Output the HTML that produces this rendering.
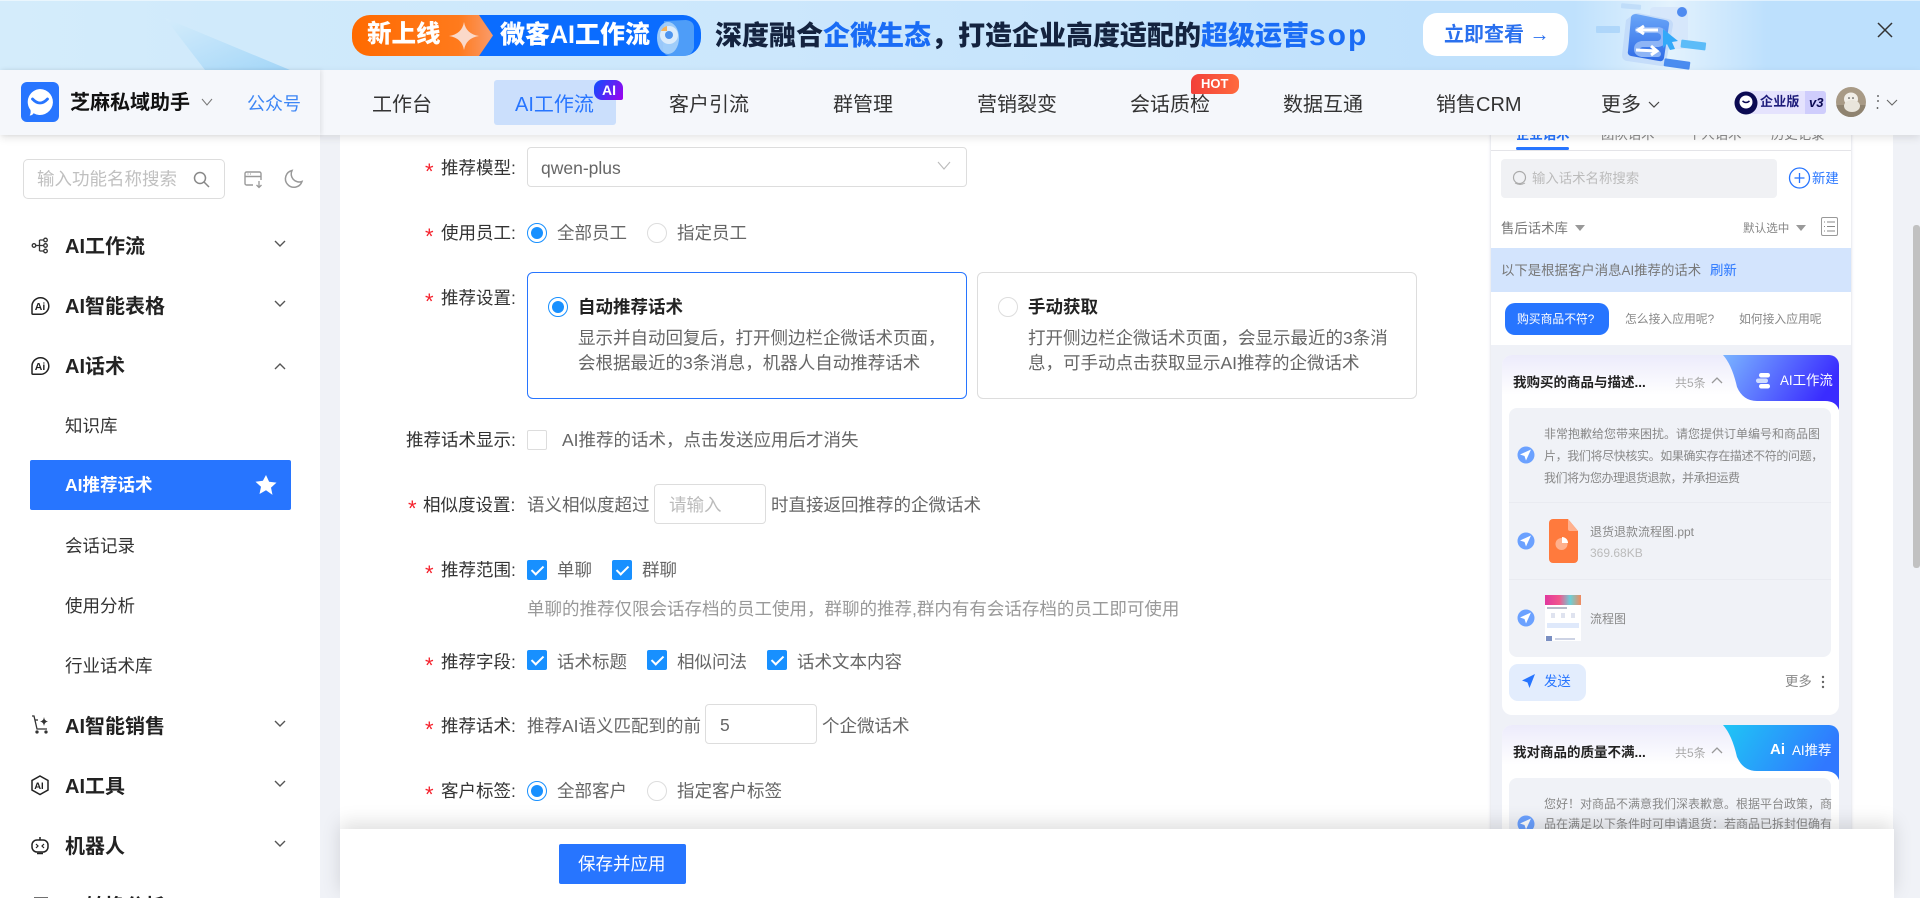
<!DOCTYPE html>
<html lang="zh-CN"><head><meta charset="utf-8"><title>AI推荐话术</title>
<style>
html,body{margin:0;padding:0;width:1920px;height:898px;overflow:hidden;background:#f0f2f7}
body{font-family:"Liberation Sans","Noto Sans CJK SC",sans-serif;position:relative;font-size:17.5px;color:#333}
.a,.t{position:absolute;box-sizing:border-box}
.t{white-space:nowrap;line-height:30px;height:30px}
.l{color:#333}.o{color:#666}.r{color:#f5222d;font-size:22px;margin-top:4px;margin-left:-1px}
.b{font-weight:700}
.nav{font-size:20px;color:#333;line-height:30px;top:90px}
.m{font-size:20px;font-weight:700;color:#222;left:65px}
.s{font-size:17.5px;color:#333;left:65px}
.radio{position:absolute;width:20px;height:20px;border-radius:50%;border:1px solid #ddd;background:#fff;box-sizing:border-box}
.radio.on{border-color:#1890ff}
.radio.on:after{content:"";position:absolute;left:3px;top:3px;width:12px;height:12px;border-radius:50%;background:#1890ff}
.cb{position:absolute;width:20px;height:20px;border-radius:2px;background:#1890ff;box-sizing:border-box}
.cb:after{content:"";position:absolute;left:7px;top:3px;width:5px;height:10px;border:solid #fff;border-width:0 2px 2px 0;transform:rotate(45deg)}
.inp{position:absolute;background:#fff;border:1px solid #ddd;border-radius:4px;box-sizing:border-box}
.p{font-size:12px;color:#888}
.p13{font-size:13.4px}
svg{position:absolute;overflow:visible}
</style></head><body>

<!-- banner -->
<div class="a" style="left:0;top:0;width:1920px;height:70px;overflow:hidden;background:linear-gradient(90deg,#d4ecfb 0,#d0eafb 12%,#cce7fc 40%,#c0e1fc 75%,#bfe1fd 82%,#e3f2fd 87%,#bde0fd 92%,#bde0fd 100%)">
 <svg width="1920" height="70" style="left:0;top:0">
  <defs>
   <linearGradient id="g1" x1="0" y1="0" x2="1" y2="1"><stop offset="0" stop-color="#d4ecfb"/><stop offset="1" stop-color="#a3d6f8"/></linearGradient>
   <linearGradient id="g2" x1="0" y1="0" x2="1" y2="0"><stop offset="0" stop-color="#ff6a00"/><stop offset=".72" stop-color="#ff7a1c"/><stop offset="1" stop-color="#f9a27a"/></linearGradient>
   <linearGradient id="g3" x1="0" y1="0" x2="0" y2="1"><stop offset="0" stop-color="#6aa6f8"/><stop offset="1" stop-color="#2f6be6"/></linearGradient>
  </defs>
  <polygon points="165,18 290,70 205,70" fill="url(#g1)"/>
  <rect x="0" y="0" width="1920" height="1" fill="#fff" opacity=".5"/>
  <!-- pill -->
  <path d="M370 15H500V56H370a18 18 0 0 1-18-18v-5a18 18 0 0 1 18-18z" fill="url(#g2)"/>
  <path d="M479 15H683a18 18 0 0 1 18 18v5a18 18 0 0 1-18 18H479l14-20.500z" fill="#0a6cff"/>
  <path d="M464 22q2 12 15 14q-13 2-15 14q-2-12-15-14q13-2 15-14z" fill="#fbd9c9"/>
  <path d="M664 21l22-1q8 1 8 8v20q-2 7-9 8h-16q-6-1-6-8z" fill="#5aa6f7" opacity=".85"/>
  <ellipse cx="668" cy="38" rx="11" ry="16" fill="#a9d3fa" opacity=".9"/>
  <circle cx="669" cy="35" r="9" fill="#dcecfb"/><circle cx="669" cy="35" r="4" fill="#4e94ee"/>
  <path d="M661 31a9 9 0 0 1 6-5v5z" fill="#f5b35c"/>
  <!-- illustration -->
  <rect x="1650" y="7" width="38" height="42" rx="4" fill="#d5e5fa" opacity=".85"/>
  <circle cx="1682" cy="12" r="5" fill="#4f8bf0"/>
  <path d="M1626 20l8-6q2-1 4-1l30 6q5 1 5 6l-7 38q-1 4-5 3l-34-5q-5-1-5-6z" fill="#bcd5f8" opacity=".7"/>
  <path d="M1631 17q1-3 5-3l29 6q5 1 4 5l-5 33q-1 4-5 3l-28-5q-4-1-3-5z" fill="url(#g3)"/>
  <path d="M1638 30h20q6 1 6 7t-6 7h-16q-5 1-5 5t5 5h16" fill="none" stroke="#8eb5f6" stroke-width="6" stroke-linecap="round"/>
  <path d="M1658 30h-20m6-4l-6 4 6 4" fill="none" stroke="#fff" stroke-width="3"/>
  <path d="M1636 50l20 1m-5-5l6 5-6 4" fill="none" stroke="#fff" stroke-width="3"/>
  <path d="M1663 29l15 12-6 1 3 7-5 1-3-6-4 4z" fill="#33a9f9"/>
  <rect x="1621" y="4" width="20" height="5" rx="1" fill="#bcd9f8" opacity=".8" transform="rotate(5 1631 7)"/>
  <rect x="1596" y="26" width="24" height="7" rx="1" fill="#a8d2f9" opacity=".8"/>
  <rect x="1681" y="41" width="25" height="8" rx="1" fill="#5cbcf8" transform="rotate(7 1693 44)"/>
  <rect x="1664" y="60" width="26" height="8" rx="1" fill="#4a8cf0" transform="rotate(8 1677 64)"/>
 </svg>
 <span class="t" style="left:367px;top:20px;font-size:24.5px;color:#fff;font-weight:900;">新上线</span>
 <span class="t" style="left:500px;top:20px;font-size:25px;color:#fff;font-weight:900;">微客AI工作流</span>
 <span class="t" style="left:715px;top:21px;font-size:27px;color:#14233f;font-weight:900">深度融合<span style="color:#1a6cf5">企微生态</span>，打造企业高度适配的<span style="color:#1a6cf5">超级运营<span style="font-size:30px;letter-spacing:2px">sop</span></span></span>
 <div class="a" style="left:1423px;top:13px;width:145px;height:43px;background:#fff;border-radius:14px"></div>
 <span class="t b" style="left:1444px;top:20px;font-size:20px;color:#2a70ee;">立即查看 →</span>
 <svg width="18" height="18" style="left:1876px;top:21px"><path d="M2 2L16 16M16 2L2 16" stroke="#333" stroke-width="1.500"/></svg>
</div>

<!-- main surfaces -->
<div class="a" style="left:0;top:135px;width:320px;height:763px;background:#fff"></div>
<div class="a" style="left:340px;top:135px;width:1553px;height:763px;background:#fff"></div>

<!-- preview panel -->
<div class="a" style="left:1491px;top:125px;width:360px;height:773px;background:#eff1f7;box-shadow:0 0 3px rgba(120,130,160,.35);overflow:hidden;filter:blur(.35px)">
 <div class="a" style="left:0;top:0;width:360px;height:220px;background:#fff"></div>
 <span class="t p13" style="left:25px;top:-5px;color:#2775ff;font-weight:700">企业话术</span>
 <span class="t p13" style="left:110px;top:-5px;color:#888">团队话术</span>
 <span class="t p13" style="left:197px;top:-5px;color:#888">个人话术</span>
 <span class="t p13" style="left:280px;top:-5px;color:#888">历史记录</span>
 <div class="a" style="left:25px;top:22px;width:53px;height:3px;background:#2775ff;border-radius:2px"></div>
 <div class="a" style="left:0;top:25px;width:360px;height:1px;background:#e4e4e8"></div>
 <div class="a" style="left:10px;top:34px;width:276px;height:39px;background:#f0f1f4;border-radius:4px"></div>
 <svg width="16" height="16" style="left:21px;top:45px"><circle cx="7.500" cy="7.500" r="6" fill="none" stroke="#aaa" stroke-width="1.200"/><path d="M3 13q5 3 10 0" stroke="#aaa" fill="none"/></svg>
 <span class="t p13" style="left:41px;top:39px;color:#bbb">输入话术名称搜索</span>
 <svg width="24" height="24" style="left:297px;top:41px"><circle cx="11.500" cy="12" r="10" fill="none" stroke="#2775ff" stroke-width="1.300"/><path d="M11.500 7v10M6.500 12h10" stroke="#2775ff" stroke-width="1.300"/></svg>
 <span class="t p13" style="left:321px;top:39px;color:#2775ff">新建</span>
 <span class="t p13" style="left:10px;top:89px;color:#777">售后话术库</span>
 <svg width="12" height="8" style="left:83px;top:99px"><path d="M1 1h10L6 7z" fill="#999"/></svg>
 <span class="t" style="left:252px;top:89px;color:#888;font-size:11.600px">默认选中</span>
 <svg width="12" height="8" style="left:304px;top:99px"><path d="M1 1h10L6 7z" fill="#999"/></svg>
 <svg width="18" height="20" style="left:330px;top:92px"><rect x=".5" y=".5" width="16" height="18" rx="1.500" fill="#fff" stroke="#999"/><path d="M3 5h1M6 5h8M3 9.500h1M6 9.500h8M3 14h1M6 14h8" stroke="#888"/></svg>
 <div class="a" style="left:0;top:123px;width:360px;height:44px;background:#d3e4fd"></div>
 <span class="t p13" style="left:10px;top:131px;color:#777">以下是根据客户消息AI推荐的话术</span>
 <span class="t p13" style="left:219px;top:131px;color:#2775ff">刷新</span>
 <div class="a" style="left:14px;top:178px;width:104px;height:32px;background:#2775ff;border-radius:10px"></div>
 <span class="t" style="left:26px;top:179px;color:#fff;font-size:11.800px">购买商品不符?</span>
 <span class="t" style="left:134px;top:179px;color:#888;font-size:11.800px">怎么接入应用呢?</span>
 <span class="t" style="left:248px;top:179px;color:#888;font-size:11.800px">如何接入应用呢</span>

 <!-- card 1 -->
 <div class="a" style="left:11px;top:230px;width:337px;height:360px;background:#fff;border-radius:10px;overflow:hidden">
  <div class="a" style="left:0;top:0;width:337px;height:40px;background:linear-gradient(180deg,#ecebfb,#fff)"></div>
  <svg width="337" height="60" style="left:0;top:0">
   <defs><linearGradient id="g4" x1="0" x2="1" y1="0" y2=".3"><stop offset="0" stop-color="#7ab4ff"/><stop offset="1" stop-color="#3a2cff"/></linearGradient></defs>
   <path d="M221 0H337V55q-3-9-14-9H255q-14 0-20-14q-5-22-14-32z" fill="url(#g4)"/>
  </svg>
  <svg width="16" height="16" style="left:254px;top:18px"><rect x="3" y="0" width="11" height="4.500" rx="2.200" fill="#fff"/><rect x="0" y="5.500" width="12" height="4.500" rx="2.200" fill="#cfdcff"/><rect x="3" y="11" width="11" height="4.500" rx="2.200" fill="#fff"/></svg>
  <span class="t p13" style="left:278px;top:11px;color:#fff;">AI工作流</span>
  <span class="t b" style="left:11px;top:13px;color:#222;font-size:13.500px">我购买的商品与描述...</span>
  <span class="t" style="left:173px;top:13px;color:#aaa;font-size:12px">共5条</span>
  <svg width="12" height="8" style="left:209px;top:21px"><path d="M1 7l5-5 5 5" fill="none" stroke="#999" stroke-width="1.300"/></svg>
  <div class="a" style="left:7px;top:53px;width:322px;height:249px;background:#f0f2f7;border-radius:8px"></div>
  <div class="a" style="left:7px;top:147px;width:322px;height:1px;background:#e9ebf1"></div>
  <div class="a" style="left:7px;top:224px;width:322px;height:1px;background:#e9ebf1"></div>
  <svg width="20" height="20" style="left:14px;top:90px"><circle cx="10" cy="10" r="8.500" fill="#6ba1ff"/><path d="M15 4.500L4 9.500l4.500 1.500 1.500 4.500z" fill="#fff"/></svg>
  <svg width="20" height="20" style="left:14px;top:176px"><circle cx="10" cy="10" r="8.500" fill="#6ba1ff"/><path d="M15 4.500L4 9.500l4.500 1.500 1.500 4.500z" fill="#fff"/></svg>
  <svg width="20" height="20" style="left:14px;top:253px"><circle cx="10" cy="10" r="8.500" fill="#6ba1ff"/><path d="M15 4.500L4 9.500l4.500 1.500 1.500 4.500z" fill="#fff"/></svg>
  <span class="t p" style="left:42px;top:64px">非常抱歉给您带来困扰。请您提供订单编号和商品图</span>
  <span class="t p" style="left:42px;top:86px;letter-spacing:-.38px">片，我们将尽快核实。如果确实存在描述不符的问题，</span>
  <span class="t p" style="left:42px;top:108px;letter-spacing:-.5px">我们将为您办理退货退款，并承担运费</span>
  <svg width="30" height="46" style="left:47px;top:163px"><path d="M4 1H19L29 13V41a4 4 0 0 1-4 4H4a4 4 0 0 1-4-4V5a4 4 0 0 1 4-4z" fill="#ff7a3d"/><path d="M19 1L29 13H21a2 2 0 0 1-2-2z" fill="#ffb08d"/><circle cx="12.500" cy="26" r="6" fill="#ffb08d"/><path d="M13 19a6 6 0 0 1 6 6h-6z" fill="#fff"/></svg>
  <span class="t p" style="left:88px;top:162px;">退货退款流程图.ppt</span>
  <span class="t p" style="left:88px;top:183px;color:#bbb">369.68KB</span>
  <div class="a" style="left:43px;top:240px;width:36px;height:46px;background:#fff"></div>
  <div class="a" style="left:43px;top:240px;width:36px;height:10px;background:linear-gradient(90deg,#e0389f,#f2568c 40%,#6ad0d8 70%,#f2895d)"></div>
  <div class="a" style="left:45px;top:252px;width:20px;height:2px;background:#b8bac8"></div>
  <div class="a" style="left:49px;top:258px;width:4px;height:5px;background:#dfe3ef"></div>
  <div class="a" style="left:59px;top:258px;width:4px;height:5px;background:#dfe3ef"></div>
  <div class="a" style="left:69px;top:258px;width:4px;height:5px;background:#dfe3ef"></div>
  <div class="a" style="left:45px;top:268px;width:32px;height:5px;background:#dfe9fb"></div>
  <div class="a" style="left:44px;top:281px;width:6px;height:5px;background:#7a8fc2"></div>
  <div class="a" style="left:53px;top:283px;width:20px;height:2px;background:#cdd3e4"></div>
  <span class="t p" style="left:88px;top:249px;">流程图</span>
  <div class="a" style="left:7px;top:309px;width:77px;height:37px;background:#e3edfd;border-radius:9px"></div>
  <svg width="14" height="15" style="left:20px;top:319px"><path d="M13 0L0 6.500l5.500 2 2 5.500z" fill="#2775ff"/></svg>
  <span class="t p13" style="left:42px;top:312px;color:#2775ff">发送</span>
  <span class="t p13" style="left:283px;top:312px;color:#888">更多</span>
  <svg width="4" height="14" style="left:319px;top:320px"><circle cx="2" cy="2" r="1.200" fill="#666"/><circle cx="2" cy="7" r="1.200" fill="#666"/><circle cx="2" cy="12" r="1.200" fill="#666"/></svg>
 </div>

 <!-- card 2 -->
 <div class="a" style="left:11px;top:600px;width:337px;height:200px;background:#fff;border-radius:10px;overflow:hidden">
  <div class="a" style="left:0;top:0;width:337px;height:40px;background:linear-gradient(180deg,#ecebfb,#fff)"></div>
  <svg width="337" height="60" style="left:0;top:0">
   <defs><linearGradient id="g5" x1="0" x2="1" y1="0" y2=".3"><stop offset="0" stop-color="#1fc6f5"/><stop offset="1" stop-color="#3078ff"/></linearGradient></defs>
   <path d="M221 0H337V55q-3-9-14-9H255q-14 0-20-14q-5-22-14-32z" fill="url(#g5)"/>
  </svg>
  <span class="t" style="left:268px;top:10px;color:#fff;font-size:15px;font-weight:900">Ai</span>
  <span class="t p13" style="left:290px;top:11px;color:#fff;">AI推荐</span>
  <span class="t b" style="left:11px;top:13px;color:#222;font-size:13.500px">我对商品的质量不满...</span>
  <span class="t" style="left:173px;top:13px;color:#aaa;font-size:12px">共5条</span>
  <svg width="12" height="8" style="left:209px;top:21px"><path d="M1 7l5-5 5 5" fill="none" stroke="#999" stroke-width="1.300"/></svg>
  <div class="a" style="left:7px;top:53px;width:322px;height:140px;background:#f0f2f7;border-radius:8px"></div>
  <svg width="20" height="20" style="left:14px;top:89px"><circle cx="10" cy="10" r="8.500" fill="#6ba1ff"/><path d="M15 4.500L4 9.500l4.500 1.500 1.500 4.500z" fill="#fff"/></svg>
  <span class="t p" style="left:42px;top:64px">您好！对商品不满意我们深表歉意。根据平台政策，商</span>
  <span class="t p" style="left:42px;top:84px">品在满足以下条件时可申请退货：若商品已拆封但确有</span>
 </div>
</div>

<!-- form -->
<span class="t r" style="left:426px;top:153px">*</span><span class="t l" style="left:441px;top:153px">推荐模型:</span>
<div class="inp" style="left:527px;top:147px;width:440px;height:40px"></div>
<span class="t o" style="left:541px;top:153px">qwen-plus</span>
<svg width="14" height="10" style="left:937px;top:161px"><path d="M1 1l6 7 6-7" fill="none" stroke="#bbb" stroke-width="1.100"/></svg>

<span class="t r" style="left:426px;top:218px">*</span><span class="t l" style="left:441px;top:218px">使用员工:</span>
<div class="radio on" style="left:527px;top:223px"></div><span class="t o" style="left:557px;top:218px">全部员工</span>
<div class="radio" style="left:647px;top:223px"></div><span class="t o" style="left:677px;top:218px">指定员工</span>

<span class="t r" style="left:426px;top:283px">*</span><span class="t l" style="left:441px;top:283px">推荐设置:</span>
<div class="a" style="left:527px;top:272px;width:440px;height:127px;border:1px solid #2775ff;border-radius:6px;background:#fff"></div>
<div class="radio on" style="left:548px;top:297px"></div>
<span class="t b" style="left:578px;top:292px;color:#222">自动推荐话术</span>
<span class="t o" style="left:578px;top:323px">显示并自动回复后，打开侧边栏企微话术页面，</span>
<span class="t o" style="left:578px;top:348px">会根据最近的3条消息，机器人自动推荐话术</span>
<div class="a" style="left:977px;top:272px;width:440px;height:127px;border:1px solid #ddd;border-radius:6px;background:#fff"></div>
<div class="radio" style="left:998px;top:297px"></div>
<span class="t b" style="left:1028px;top:292px;color:#222">手动获取</span>
<span class="t o" style="left:1028px;top:323px">打开侧边栏企微话术页面，会显示最近的3条消</span>
<span class="t o" style="left:1028px;top:348px">息，可手动点击获取显示AI推荐的企微话术</span>

<span class="t l" style="left:406px;top:425px">推荐话术显示:</span>
<div class="inp" style="left:527px;top:430px;width:20px;height:20px;border-radius:2px"></div>
<span class="t o" style="left:562px;top:425px">AI推荐的话术，点击发送应用后才消失</span>

<span class="t r" style="left:409px;top:490px">*</span><span class="t l" style="left:423px;top:490px">相似度设置:</span>
<span class="t o" style="left:527px;top:490px">语义相似度超过</span>
<div class="inp" style="left:654px;top:484px;width:112px;height:40px"></div>
<span class="t" style="left:669px;top:490px;color:#bbb">请输入</span>
<span class="t o" style="left:771px;top:490px">时直接返回推荐的企微话术</span>

<span class="t r" style="left:426px;top:555px">*</span><span class="t l" style="left:441px;top:555px">推荐范围:</span>
<div class="cb" style="left:527px;top:560px"></div><span class="t o" style="left:557px;top:555px">单聊</span>
<div class="cb" style="left:612px;top:560px"></div><span class="t o" style="left:642px;top:555px">群聊</span>
<span class="t" style="left:527px;top:594px;color:#999">单聊的推荐仅限会话存档的员工使用，群聊的推荐,群内有有会话存档的员工即可使用</span>

<span class="t r" style="left:426px;top:647px">*</span><span class="t l" style="left:441px;top:647px">推荐字段:</span>
<div class="cb" style="left:527px;top:650px"></div><span class="t o" style="left:557px;top:647px">话术标题</span>
<div class="cb" style="left:647px;top:650px"></div><span class="t o" style="left:677px;top:647px">相似问法</span>
<div class="cb" style="left:767px;top:650px"></div><span class="t o" style="left:797px;top:647px">话术文本内容</span>

<span class="t r" style="left:426px;top:711px">*</span><span class="t l" style="left:441px;top:711px">推荐话术:</span>
<span class="t o" style="left:527px;top:711px">推荐AI语义匹配到的前</span>
<div class="inp" style="left:705px;top:704px;width:112px;height:40px"></div>
<span class="t o" style="left:720px;top:710px">5</span>
<span class="t o" style="left:822px;top:711px">个企微话术</span>

<span class="t r" style="left:426px;top:776px">*</span><span class="t l" style="left:441px;top:776px">客户标签:</span>
<div class="radio on" style="left:527px;top:781px"></div><span class="t o" style="left:557px;top:776px">全部客户</span>
<div class="radio" style="left:647px;top:781px"></div><span class="t o" style="left:677px;top:776px">指定客户标签</span>

<!-- bottom bar -->
<div class="a" style="left:340px;top:829px;width:1554px;height:69px;background:#fff;box-shadow:0 -6px 18px rgba(0,0,0,.13)"></div>
<div class="a" style="left:559px;top:844px;width:127px;height:40px;background:#2775ff;border-radius:2px"></div>
<span class="t" style="left:578px;top:849px;color:#fff">保存并应用</span>

<!-- scrollbar -->
<div class="a" style="left:1913px;top:225px;width:7px;height:343px;background:#c1c1c1;border-radius:3px"></div>

<!-- sidebar -->
<div class="a" style="left:23px;top:159px;width:202px;height:40px;border:1px solid #ddd;border-radius:5px;background:#fff"></div>
<span class="t" style="left:37px;top:164px;color:#c0c0c0;">输入功能名称搜索</span>
<svg width="18" height="18" style="left:193px;top:171px"><circle cx="7" cy="7" r="5.500" fill="none" stroke="#888" stroke-width="1.500"/><path d="M11 11l5 5" stroke="#888" stroke-width="1.500"/></svg>
<svg width="20" height="18" style="left:244px;top:171px"><path d="M9 14H2.500a1.500 1.500 0 0 1-1.500-1.500V2.500A1.500 1.500 0 0 1 2.500 1h13A1.500 1.500 0 0 1 17 2.500V9M1 5.500h16" fill="none" stroke="#999" stroke-width="1.400"/><path d="M3.500 3h1M6 3h1" stroke="#999"/><path d="M15 10v6m-2.500-2l2.500 2.500 2.500-2.500" fill="none" stroke="#999" stroke-width="1.300"/></svg>
<svg width="20" height="20" style="left:284px;top:169px"><path d="M8 1.500a8.500 8.500 0 1 0 10 11A8 8 0 0 1 8 1.500z" fill="none" stroke="#999" stroke-width="1.500"/></svg>

<svg width="20" height="20" style="left:30px;top:236px" fill="none" stroke="#333" stroke-width="1.300"><circle cx="4" cy="9.500" r="1.800"/><circle cx="15.500" cy="4" r="1.800"/><circle cx="15.500" cy="9.500" r="1.800"/><circle cx="15.500" cy="15" r="1.800"/><path d="M6 9.500h7.500M9.500 4v11M9.500 4h4M9.500 15h4"/></svg>
<span class="t m" style="top:232px">AI工作流</span>
<svg width="12" height="8" style="left:274px;top:240px"><path d="M1 1l5 5 5-5" fill="none" stroke="#555" stroke-width="1.400"/></svg>

<svg width="19" height="19" style="left:31px;top:297px"><path d="M9.500 .7a8.300 8.300 0 1 1 0 16.600H2a1 1 0 0 1-1-1V9.500A8.500 8.500 0 0 1 9.500 .7z" fill="none" stroke="#222" stroke-width="1.500"/><text x="3.800" y="13" font-size="10.500" font-weight="700" fill="#222" font-family="Liberation Sans">Ai</text></svg>
<span class="t m" style="top:292px">AI智能表格</span>
<svg width="12" height="8" style="left:274px;top:300px"><path d="M1 1l5 5 5-5" fill="none" stroke="#555" stroke-width="1.400"/></svg>

<svg width="19" height="19" style="left:31px;top:357px"><path d="M9.500 .7a8.300 8.300 0 1 1 0 16.600H2a1 1 0 0 1-1-1V9.500A8.500 8.500 0 0 1 9.500 .7z" fill="none" stroke="#222" stroke-width="1.500"/><text x="3.800" y="13" font-size="10.500" font-weight="700" fill="#222" font-family="Liberation Sans">Ai</text></svg>
<span class="t m" style="top:352px">AI话术</span>
<svg width="12" height="8" style="left:274px;top:362px"><path d="M1 7l5-5 5 5" fill="none" stroke="#555" stroke-width="1.400"/></svg>

<span class="t s" style="top:411px">知识库</span>
<div class="a" style="left:30px;top:460px;width:261px;height:50px;background:#2775ff;border-radius:2px"></div>
<span class="t b" style="left:65px;top:470px;color:#fff">AI推荐话术</span>
<svg width="22" height="22" style="left:255px;top:474px"><path d="M11 1l3.100 6.800 7.400.8-5.500 5 1.500 7.300L11 16.200 4.500 20l1.500-7.300-5.500-5 7.400-.9z" fill="#fff"/></svg>
<span class="t s" style="top:531px">会话记录</span>
<span class="t s" style="top:591px">使用分析</span>
<span class="t s" style="top:651px">行业话术库</span>

<svg width="20" height="20" style="left:30px;top:715px" fill="none" stroke="#333" stroke-width="1.300"><path d="M2 1h2l3 13h10"/><path d="M4.500 5H8"/><circle cx="7" cy="17" r="1" fill="#333"/><circle cx="16" cy="17" r="1" fill="#333"/><path d="M14 2q.5 4 4 4.500q-3.500.5-4 4.500q-.5-4-4-4.500q3.500-.5 4-4.500z" fill="#333" stroke="none"/></svg>
<span class="t m" style="top:712px">AI智能销售</span>
<svg width="12" height="8" style="left:274px;top:720px"><path d="M1 1l5 5 5-5" fill="none" stroke="#555" stroke-width="1.400"/></svg>

<svg width="20" height="21" style="left:30px;top:775px"><path d="M10 1l8 4.500v9.500l-8 4.500-8-4.500V5.500z" fill="none" stroke="#222" stroke-width="1.500"/><text x="4.200" y="14" font-size="9.500" font-weight="700" fill="#222" font-family="Liberation Sans">AI</text></svg>
<span class="t m" style="top:772px">AI工具</span>
<svg width="12" height="8" style="left:274px;top:780px"><path d="M1 1l5 5 5-5" fill="none" stroke="#555" stroke-width="1.400"/></svg>

<svg width="20" height="20" style="left:30px;top:836px" fill="none" stroke="#222" stroke-width="1.500"><rect x="2" y="4" width="16" height="12" rx="5"/><path d="M10 1v3M7 17.500h6"/><path d="M6 8l2 2-2 2M14 8l-2 2 2 2" stroke-width="1.200"/></svg>
<span class="t m" style="top:832px">机器人</span>
<svg width="12" height="8" style="left:274px;top:840px"><path d="M1 1l5 5 5-5" fill="none" stroke="#555" stroke-width="1.400"/></svg>
<svg width="20" height="6" style="left:32px;top:896px"><path d="M2 2h14" stroke="#333" stroke-width="1.400"/></svg>
<span class="t m" style="top:892px">AI转换分析</span>

<!-- nav -->
<div class="a" style="left:0;top:70px;width:1920px;height:65px;background:#f5f7fb;box-shadow:0 3px 8px rgba(0,0,0,.1)"></div>
<div class="a" style="left:0;top:70px;width:320px;height:65px;background:#f5f7fb;box-shadow:2px 0 4px rgba(0,0,0,.08)"></div>
<svg width="38" height="40" style="left:21px;top:82px"><rect width="38" height="40" rx="6" fill="#2775ff"/><path d="M19 7a13 13 0 1 1-6.500 24.300q-1 2.200-3.800 2.200q1.300-2.500.8-5.500A13 13 0 0 1 19 7z" fill="#fff"/><path d="M11.500 17q7.500 8 15 0" fill="none" stroke="#2775ff" stroke-width="2.800" stroke-linecap="round"/></svg>
<span class="t b" style="left:70px;top:88px;font-size:20px;color:#111">芝麻私域助手</span>
<svg width="12" height="8" style="left:201px;top:98px"><path d="M1 1l5 6 5-6" fill="none" stroke="#777" stroke-width="1"/></svg>
<span class="t" style="left:247px;top:89px;font-size:18px;color:#3d86f5">公众号</span>

<span class="t nav" style="left:372px">工作台</span>
<div class="a" style="left:494px;top:80px;width:122px;height:45px;background:#cbdffc;border-radius:3px"></div>
<span class="t nav" style="left:515px;color:#2775ff">AI工作流</span>
<div class="a" style="left:594px;top:80px;width:29px;height:20px;background:linear-gradient(120deg,#0a50ff,#a000ee);border-radius:8px 8px 2px 8px"></div>
<span class="t b" style="left:602px;top:75px;font-size:14px;color:#fff">AI</span>
<span class="t nav" style="left:669px">客户引流</span>
<span class="t nav" style="left:833px">群管理</span>
<span class="t nav" style="left:977px">营销裂变</span>
<span class="t nav" style="left:1130px">会话质检</span>
<div class="a" style="left:1191px;top:74px;width:48px;height:20px;background:linear-gradient(90deg,#f2403a,#ff6a3d);border-radius:8px 8px 8px 2px"></div>
<span class="t" style="left:1201px;top:69px;font-size:13px;color:#fff;font-weight:700">HOT</span>
<span class="t nav" style="left:1283px">数据互通</span>
<span class="t nav" style="left:1436px">销售CRM</span>
<span class="t nav" style="left:1601px">更多</span>
<svg width="12" height="8" style="left:1648px;top:101px"><path d="M1 1l5 5 5-5" fill="none" stroke="#444" stroke-width="1.200"/></svg>

<div class="a" style="left:1740px;top:91px;width:86px;height:23px;background:#e5e3fd;border-radius:3px"></div>
<div class="a" style="left:1805px;top:91px;width:21px;height:23px;background:#cfcdfc;border-radius:0 3px 3px 0"></div>
<svg width="24" height="24" style="left:1734px;top:91px"><circle cx="12" cy="12" r="11.500" fill="#0b0a52"/><circle cx="12" cy="11" r="6.500" fill="#fff"/><path d="M8.500 10q3.500 3 7 0" fill="none" stroke="#0b0a52" stroke-width="1.500"/></svg>
<span class="t b" style="left:1760px;top:87px;font-size:13px;color:#1c1a7a;letter-spacing:.2px">企业版</span>
<span class="t b" style="left:1809px;top:88px;font-size:13px;color:#0b0a52;font-style:italic">v3</span>
<svg width="30" height="30" style="left:1836px;top:87px"><defs><clipPath id="av"><circle cx="15" cy="15" r="15"/></clipPath></defs><g clip-path="url(#av)"><rect width="30" height="30" fill="#a89a86"/><rect y="18" width="30" height="12" fill="#8f8370"/><ellipse cx="15" cy="12" rx="7" ry="6.500" fill="#f1eee8"/><ellipse cx="16" cy="19" rx="8" ry="6" fill="#e9e5dc"/><circle cx="13" cy="11" r=".8" fill="#333"/><circle cx="17" cy="11" r=".8" fill="#333"/></g></svg>
<svg width="4" height="16" style="left:1876px;top:94px"><circle cx="2" cy="2" r=".9" fill="#444"/><circle cx="2" cy="7" r=".9" fill="#444"/><circle cx="1.500" cy="14" r=".9" fill="#444"/></svg>
<svg width="12" height="8" style="left:1886px;top:99px"><path d="M1 1l5 5 5-5" fill="none" stroke="#666" stroke-width="1.100"/></svg>

</body></html>
